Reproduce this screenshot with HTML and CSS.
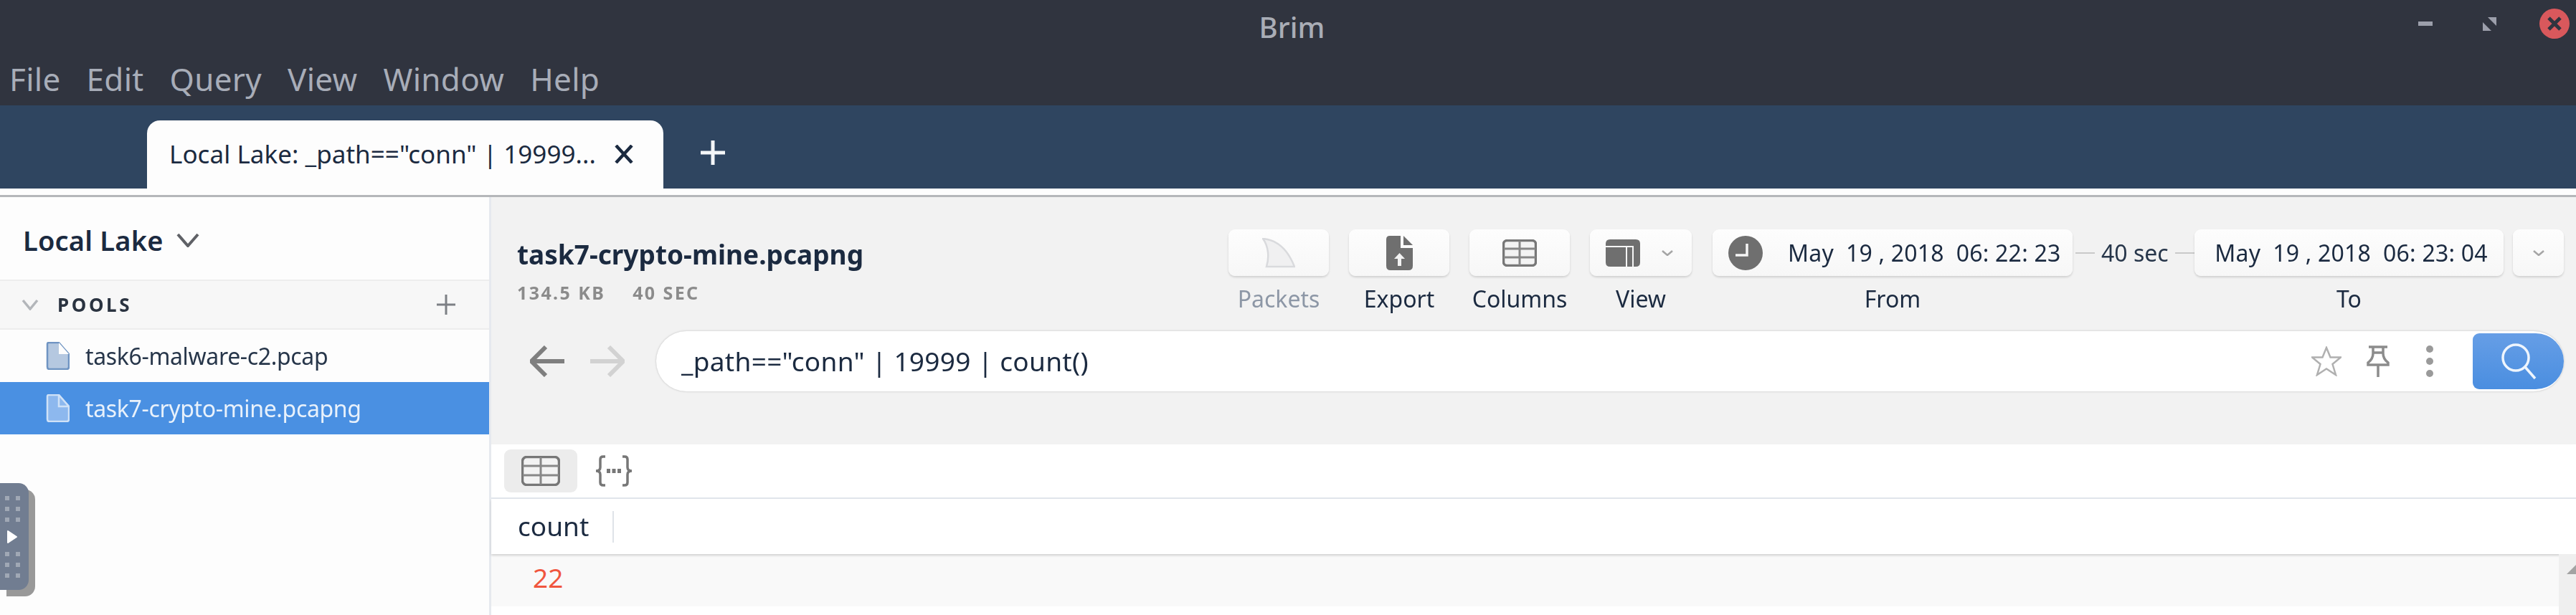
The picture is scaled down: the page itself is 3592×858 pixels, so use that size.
FILE: index.html
```html
<!DOCTYPE html>
<html lang="en">
<head>
<meta charset="utf-8">
<title>Brim</title>
<link rel="stylesheet" href="styles.css">
</head>
<body>
<div class="window">
  <header class="titlebar">
    <div class="title-row">
      <span></span>
      <span class="app-title">Brim</span>
      <div class="controls">
        <span class="ctl-min"></span>
        <svg class="ctl-max" viewBox="0 0 19 19"><path d="M7 0H19V12ZM0 7L12 19H0Z"/></svg>
        <svg class="ctl-close" viewBox="0 0 42 42"><circle cx="21" cy="21" r="21"/><path d="M13 13L29 29M29 13L13 29"/></svg>
      </div>
    </div>
    <nav class="menu">
      <span>File</span><span>Edit</span><span>Query</span><span>View</span><span>Window</span><span>Help</span>
    </nav>
  </header>
  <div class="tabbar">
    <div class="tab">
      <span class="tab-text">Local Lake: _path=="conn" | 19999...</span>
      <svg class="tab-x" viewBox="0 0 26 26"><path d="M2 1L24 25M24 1L2 25"/></svg>
    </div>
    <svg class="tab-plus" viewBox="0 0 36 36"><path d="M18 1V35M1 18H35"/></svg>
  </div>
  <div class="strip"></div>
  <div class="content">
    <aside class="sidebar">
      <div class="lake">
        <span class="lake-name">Local Lake</span>
        <svg class="lake-chev" viewBox="0 0 32 20"><path d="M2 2L16 18L30 2"/></svg>
      </div>
      <div class="pools-head">
        <svg class="pools-chev" viewBox="0 0 24 16"><path d="M2 2L12 14L22 2"/></svg>
        <span class="pools-label">POOLS</span>
        <svg class="pools-plus" viewBox="0 0 26 28"><path d="M13 0V28M0 14H26"/></svg>
      </div>
      <div class="pool">
        <svg class="file" viewBox="0 0 33 39"><path d="M2 3Q2 1 4 1H18L32 17V35Q32 38 29 38H5Q2 38 2 35Z"/><path class="fold" d="M18 1V17H32Z"/></svg>
        <span>task6-malware-c2.pcap</span>
      </div>
      <div class="pool selected">
        <svg class="file" viewBox="0 0 33 39"><path d="M2 3Q2 1 4 1H18L32 17V35Q32 38 29 38H5Q2 38 2 35Z"/><path class="fold" d="M18 1V17H32Z"/></svg>
        <span>task7-crypto-mine.pcapng</span>
      </div>
    </aside>
    <main class="main">
      <section class="head">
        <div class="head-top">
          <div class="file-info">
            <div class="file-name">task7-crypto-mine.pcapng</div>
            <div class="file-meta"><span>134.5 KB</span><span>40 SEC</span></div>
          </div>
          <div class="actions">
            <div class="action disabled">
              <div class="btn"><svg class="ic-fin" viewBox="0 0 46 42"><path d="M1 1C25 3 38 22 45 40H6C10 27 9 12 1 1Z"/></svg></div>
              <span class="label">Packets</span>
            </div>
            <div class="action">
              <div class="btn"><svg class="ic-export" viewBox="0 0 37 48"><path d="M5 0H20V17H37V42Q37 48 31 48H6Q0 48 0 42V5Q0 0 5 0Z"/><path d="M24 0L37 13H24Z"/><path class="arrow" d="M18.500 24L26 32H21V42H16V32H11Z"/></svg></div>
              <span class="label">Export</span>
            </div>
            <div class="action">
              <div class="btn"><svg class="ic-table" viewBox="0 0 48 38"><rect x="1.500" y="1.500" width="45" height="35" rx="5"/><path d="M24 2V36M2 13H46M2 25H46"/></svg></div>
              <span class="label">Columns</span>
            </div>
            <div class="action action-view">
              <div class="btn btn-view">
                <svg class="ic-view" viewBox="0 0 48 38"><path d="M6 0H42Q48 0 48 6V32Q48 38 42 38H6Q0 38 0 32V6Q0 0 6 0Z"/><path class="cut" d="M0 10H38V38M29 10V38"/></svg>
                <svg class="mini-chev" viewBox="0 0 16 8"><path d="M1 1L8 7L15 1"/></svg>
              </div>
              <span class="label">View</span>
            </div>
            <div class="action action-from">
              <div class="btn btn-date">
                <svg class="ic-clock" viewBox="0 0 48 48"><circle cx="24" cy="24" r="24"/><path d="M26 11V27H10"/></svg>
                <span class="date-text">May&nbsp; 19 , 2018&nbsp; 06: 22: 23</span>
              </div>
              <span class="label">From</span>
            </div>
            <div class="span">
              <i class="dash"></i><span>40 sec</span><i class="dash"></i>
            </div>
            <div class="action action-to">
              <div class="btn btn-date-to"><span class="date-text">May&nbsp; 19 , 2018&nbsp; 06: 23: 04</span></div>
              <span class="label">To</span>
            </div>
            <div class="btn btn-more"><svg class="mini-chev" viewBox="0 0 16 8"><path d="M1 1L8 7L15 1"/></svg></div>
          </div>
        </div>
        <div class="search-row">
          <svg class="nav back" viewBox="0 0 48 44"><path d="M22 2L2 22L22 42M2 22H48"/></svg>
          <svg class="nav fwd" viewBox="0 0 48 44"><path d="M26 2L46 22L26 42M46 22H0"/></svg>
          <div class="search">
            <span class="query">_path=="conn" | 19999 | count()</span>
            <span class="slot"><svg class="ic-star" viewBox="0 0 42 42"><path d="M21 2L26.500 15.500H41L29.500 25L34 40L21 31.500L8 40L12.500 25L1 15.500H15.500Z"/></svg></span>
            <span class="slot"><svg class="ic-pin" viewBox="0 0 32 44"><path d="M3 2H29M9 2V11C9 17 6 21 2 24V27H30V24C26 21 23 17 23 11V2M16 27V44M9 10H23"/></svg></span>
            <span class="slot"><svg class="ic-dots" viewBox="0 0 12 44"><circle cx="6" cy="5" r="5"/><circle cx="6" cy="22" r="5"/><circle cx="6" cy="39" r="5"/></svg></span>
            <div class="go"><svg class="ic-search" viewBox="0 0 50 52"><circle cx="21" cy="21" r="18"/><path d="M34 34L48 50"/></svg></div>
          </div>
        </div>
      </section>
      <section class="results">
        <div class="view-tabs">
          <div class="view-tab active"><svg class="ic-table" viewBox="0 0 54 42"><rect x="1.500" y="1.500" width="51" height="39" rx="6"/><path d="M27 2V40M2 14H52M2 27H52"/></svg></div>
          <div class="view-tab"><svg class="ic-json" viewBox="0 0 54 44"><path d="M15 2H12Q8 2 8 6V17Q8 22 2 22Q8 22 8 27V38Q8 42 12 42H15M39 2H42Q46 2 46 6V17Q46 22 52 22Q46 22 46 27V38Q46 42 42 42H39"/><path class="json-dots" d="M17 22H37"/></svg></div>
        </div>
        <div class="col-head"><span class="col-name">count</span><i class="col-sep"></i></div>
        <div class="table-body">
          <div class="rows">
            <div class="row"><span class="num">22</span></div>
          </div>
          <div class="scroll"><i class="scroll-up"></i></div>
        </div>
      </section>
    </main>
  </div>
  <div class="handle">
    <div class="handle-dots"><i></i><i></i><i></i><i></i><i></i><i></i></div>
    <svg class="handle-play" viewBox="0 0 16 20"><path d="M2 2L14 10L2 18Z"/></svg>
    <div class="handle-dots"><i></i><i></i><i></i><i></i><i></i><i></i></div>
  </div>
</div>
</body>
</html>
```
FILE: styles.css
```css
* { box-sizing: border-box; }
html, body { margin: 0; padding: 0; overflow: hidden; }
body { font-family: "Noto Sans", "Open Sans", sans-serif; color: #1c2a3d; background: #fdfdfd; }
svg { display: block; flex: none; }
i { display: block; }

.window { position: relative; width: 3592px; height: 858px; display: flex; flex-direction: column; overflow: hidden; filter: blur(0.7px); }

.titlebar { height: 147px; background: #30343f; color: #a8adb8; }
.title-row { height: 72px; display: grid; grid-template-columns: 1fr auto 1fr; align-items: center; padding-right: 9px; }
.app-title { font-size: 40px; font-weight: 500; color: #a9adb6; transform: translate(10px, 1px); }
.controls { display: flex; justify-content: flex-end; align-items: center; gap: 60px; padding-bottom: 6px; }
.ctl-min { width: 20px; height: 6px; background: #9c9fab; margin-right: 10px; }
.ctl-max { width: 19px; height: 19px; }
.ctl-max path { fill: #9c9fab; }
.ctl-close { width: 42px; height: 42px; }
.ctl-close circle { fill: #d9585c; }
.ctl-close path { stroke: #30343f; stroke-width: 5; fill: none; }
.menu { height: 75px; display: flex; align-items: center; padding-left: 13px; gap: 36px; font-size: 44px; letter-spacing: .3px; }

.tabbar { height: 116px; background: #2f4560; display: flex; padding-top: 21px; }
.tab { margin-left: 205px; width: 720px; height: 95px; background: #fdfdfd; border-radius: 18px 18px 0 0; display: flex; align-items: center; padding: 0 41px 2px 31px; justify-content: space-between; }
.tab-text { font-size: 35px; letter-spacing: .05px; color: #1b2a40; white-space: nowrap; }
.tab-x { width: 28px; height: 26px; }
.tab-x path { stroke: #1b2a40; stroke-width: 4.500; fill: none; }
.tab-plus { width: 36px; height: 36px; margin: 27px 0 0 51px; }
.tab-plus path { stroke: #f4f6f8; stroke-width: 5; fill: none; }
.strip { height: 12px; background: #fdfdfd; border-bottom: 3px solid #b5b7ba; }

.content { flex: 1; display: flex; min-height: 0; }
.sidebar { width: 685px; flex: none; background: #fdfdfd; border-right: 3px solid #e6e9ee; display: flex; flex-direction: column; }
.lake { height: 115px; display: flex; align-items: center; padding: 4px 0 0 32px; gap: 18px; }
.lake-name { font-size: 38px; font-weight: 600; letter-spacing: .2px; color: #1b2a40; }
.lake-chev { width: 32px; height: 20px; }
.lake-chev path { stroke: #5f6166; stroke-width: 4; fill: none; }
.pools-head { height: 70px; background: #f7f7f7; border-top: 2px solid #ededed; border-bottom: 2px solid #ededed; display: flex; align-items: center; padding: 0 47px 0 30px; }
.pools-chev { width: 24px; height: 16px; }
.pools-chev path { stroke: #b3b6ba; stroke-width: 3.500; fill: none; }
.pools-label { font-size: 26px; font-weight: 700; letter-spacing: 3.600px; margin-left: 26px; flex: 1; color: #2a3340; }
.pools-plus { width: 26px; height: 28px; }
.pools-plus path { stroke: #7d8085; stroke-width: 3; fill: none; }
.pool { height: 73px; display: flex; align-items: center; padding-left: 64px; gap: 22px; font-size: 32px; letter-spacing: -.35px; color: #27364a; }
.file path { fill: #b5c8e0; stroke: #6f94c2; stroke-width: 2.500; }
.file .fold { fill: #fdfdfd; stroke: none; }
.pool.selected { background: #4a90e2; color: #e8f1fb; }
.pool.selected .file path { fill: #8db8ee; stroke: #cfe1f7; }
.pool.selected .fold { fill: #e9f1fb; stroke: none; }
.file { width: 33px; height: 39px; }

.main { flex: 1; min-width: 0; display: flex; flex-direction: column; background: #fff; }
.head { height: 345px; background: #f2f2f2; padding: 45px 17px 0 36px; }
.head-top { height: 142px; display: flex; justify-content: space-between; }
.file-info { padding-top: 13px; }
.file-name { font-size: 37px; font-weight: 700; line-height: 44px; color: #1b2a40; }
.file-meta { display: flex; gap: 38px; margin-top: 17px; font-size: 25px; font-weight: 700; letter-spacing: 2.400px; line-height: 28px; color: #8b8b8b; }
.actions { display: flex; align-items: flex-start; }
.action { display: flex; flex-direction: column; align-items: center; width: 140px; margin-right: 28px; }
.action-view { width: 142px; margin-right: 29px; }
.action-from { width: 502px; margin-right: 0; }
.action-to { width: 431px; margin-right: 13px; }
.btn { height: 65px; width: 100%; display: flex; align-items: center; justify-content: center; border-radius: 9px; background: linear-gradient(#fdfdfd, #f7f7f7); box-shadow: 0 2px 3px rgba(0,0,0,.14); }
.btn-date-to { padding-left: 6px; }
.label { margin-top: 15px; font-size: 32px; line-height: 34px; color: #1b2a40; white-space: nowrap; }
.disabled .label { color: #8d97a6; }
.ic-fin { width: 46px; height: 42px; }
.ic-fin path { fill: #f0f0f1; stroke: #d9dadd; stroke-width: 2.500; }
.ic-export { width: 37px; height: 48px; }
.ic-export path { fill: #6f6f6f; }
.ic-export .arrow { fill: #f2f2f2; }
.head .ic-table { width: 48px; height: 38px; }
.ic-table rect { fill: #f3f3f3; stroke: #777; stroke-width: 3.500; }
.ic-table path { stroke: #888; stroke-width: 3; fill: none; }
.btn-view { justify-content: flex-start; padding-left: 22px; gap: 30px; }
.ic-view { width: 48px; height: 38px; }
.ic-view path { fill: #6f6f6f; }
.ic-view .cut { fill: none; stroke: #f5f5f5; stroke-width: 2; }
.mini-chev { width: 16px; height: 8px; }
.mini-chev path { stroke: #a5a5a5; stroke-width: 2.500; fill: none; }
.btn-date { justify-content: flex-start; padding-left: 22px; gap: 35px; }
.ic-clock { width: 48px; height: 48px; }
.ic-clock circle { fill: #6f6f6f; }
.ic-clock path { stroke: #f5f5f5; stroke-width: 3.500; fill: none; }
.date-text { font-size: 32px; letter-spacing: .2px; color: #1b2a40; white-space: pre; }
.span { display: flex; align-items: center; height: 65px; font-size: 32px; color: #27364a; width: 170px; padding-left: 4px; gap: 9px; white-space: nowrap; }
.dash { width: 27px; height: 2px; background: #c9c9c9; }
.btn-more { width: 71px; }

.search-row { display: flex; align-items: center; padding-left: 18px; height: 84px; }
.nav { width: 48px; height: 44px; }
.nav path { fill: none; stroke-width: 6; }
.back path { stroke: #7f7f7f; }
.fwd { margin-left: 36px; margin-right: 44px; }
.fwd path { stroke: #d2d2d2; }
.search { flex: 1; height: 84px; background: #fff; border-radius: 42px; display: flex; align-items: center; padding-left: 35px; box-shadow: 0 0 3px rgba(0,0,0,.22); }
.query { flex: 1; font-size: 37px; letter-spacing: .3px; color: #1b2a40; white-space: nowrap; padding-bottom: 2px; }
.slot { width: 72px; display: flex; justify-content: center; }
.ic-star { width: 42px; height: 42px; }
.ic-star path { fill: none; stroke: #b0b0b0; stroke-width: 2.500; }
.ic-pin { width: 32px; height: 44px; }
.ic-pin path { fill: none; stroke: #8c8c8c; stroke-width: 3.500; }
.ic-dots { width: 12px; height: 44px; }
.ic-dots circle { fill: #9a9a9a; }
.go { margin-left: 24px; width: 127px; height: 78px; border-radius: 9px 39px 39px 9px; background: linear-gradient(#669ee6, #4a8ee0); display: flex; align-items: center; justify-content: center; }
.ic-search { width: 50px; height: 52px; }
.ic-search circle, .ic-search path { fill: none; stroke: #eef5fd; stroke-width: 3.500; }

.results { flex: 1; min-height: 0; display: flex; flex-direction: column; }
.view-tabs { height: 76px; flex: none; border-bottom: 2px solid #e1e6ec; display: flex; align-items: center; padding: 0 0 0 18px; }
.view-tab { width: 102px; height: 60px; display: flex; align-items: center; justify-content: center; border-radius: 9px; }
.view-tab.active { background: #ececec; }
.view-tab .ic-table { width: 54px; height: 42px; }
.ic-json { width: 54px; height: 44px; }
.ic-json path { fill: none; stroke: #777; stroke-width: 3.500; }
.ic-json .json-dots { stroke-width: 6; stroke-dasharray: 5 2.500; }
.col-head { height: 77px; flex: none; display: flex; align-items: center; padding-left: 37px; background: #fff; box-shadow: 0 2px 3px rgba(0,0,0,.16); position: relative; }
.col-name { font-size: 37px; color: #1b2a40; width: 132px; padding-bottom: 2px; }
.col-sep { width: 2px; height: 44px; background: #dfe3e8; }
.table-body { flex: 1; min-height: 0; display: flex; }
.rows { flex: 1; min-width: 0; }
.row { height: 73px; background: #f9f9f9; padding-left: 58px; display: flex; align-items: center; }
.num { font-size: 37px; color: #f0563f; padding-bottom: 8px; }
.scroll { width: 24px; background: #efefef; position: relative; }
.scroll-up { position: absolute; left: 11px; top: 15px; width: 0; height: 0; border-left: 13px solid transparent; border-bottom: 13px solid #a3a3a3; }

.handle { position: absolute; left: 0; top: 674px; width: 40px; height: 149px; background: #717d91; border-radius: 0 14px 14px 0; box-shadow: 9px 9px 0 #999; display: flex; flex-direction: column; align-items: flex-start; padding: 18px 0 0 7px; }
.handle-dots { display: grid; grid-template-columns: 6px 6px; column-gap: 9px; row-gap: 9px; }
.handle-dots i { width: 6px; height: 6px; background: #a0a8b5; }
.handle-play { width: 16px; height: 20px; margin: 11px 0 11px 2px; }
.handle-play path { fill: #fff; stroke: #fff; stroke-width: 2; stroke-linejoin: round; }
```
